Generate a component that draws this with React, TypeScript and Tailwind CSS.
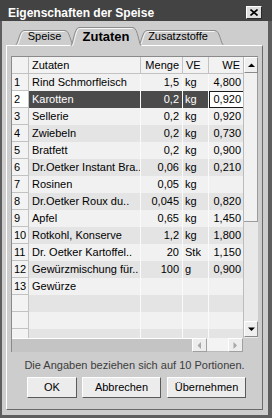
import React from "react";

const rows: string[][] = [
  ["1", "Rind Schmorfleisch", "1,5", "kg", "4,800"],
  ["2", "Karotten", "0,2", "kg", "0,920"],
  ["3", "Sellerie", "0,2", "kg", "0,920"],
  ["4", "Zwiebeln", "0,2", "kg", "0,730"],
  ["5", "Bratfett", "0,2", "kg", "0,900"],
  ["6", "Dr.Oetker Instant Bra..", "0,06", "kg", "0,210"],
  ["7", "Rosinen", "0,05", "kg", ""],
  ["8", "Dr.Oetker Roux du..", "0,045", "kg", "0,820"],
  ["9", "Apfel", "0,65", "kg", "1,450"],
  ["10", "Rotkohl, Konserve", "1,2", "kg", "1,800"],
  ["11", "Dr. Oetker Kartoffel..", "20", "Stk", "1,150"],
  ["12", "Gewürzmischung für..", "100", "g", "0,900"],
  ["13", "Gewürze", "", "", ""],
  ["", "", "", "", ""],
  ["", "", "", "", ""],
  ["", "", "", "", ""],
];

function Tab({
  label,
  w,
  h,
  active,
  className,
}: {
  label: string;
  w: number;
  h: number;
  active?: boolean;
  className: string;
}) {
  const outline = `M0.5 ${h} C3 ${h} 4 1.5 9 1.5 L${w - 9} 1.5 C${w - 4} 1.5 ${w - 3} ${h} ${w - 0.5} ${h}`;
  return (
    <div className={`relative shrink-0 flex items-end justify-center ${className}`}>
      <svg className="absolute left-0 top-0" width={w} height={h} viewBox={`0 0 ${w} ${h}`}>
        <path d={`${outline} Z`} fill="#cdcdcd" stroke="none" />
        <path d={outline} fill="none" stroke="#8c8c8c" />
        <path d={`M2 ${h} C4.5 ${h} 5.5 2.5 9.5 2.5 L${w - 9.5} 2.5`} fill="none" stroke="#f6f6f6" />
      </svg>
      <span className={`relative leading-[13px] ${active ? "font-bold text-[13px]" : "text-[11px]"}`}>
        {label}
      </span>
    </div>
  );
}

function Arrow({ dir, muted }: { dir: "up" | "down" | "left" | "right"; muted?: boolean }) {
  const pts = {
    up: "0,4 7,4 3.5,0.5",
    down: "0,0.5 7,0.5 3.5,4",
    left: "4,0 4,7 0.5,3.5",
    right: "0.5,0 0.5,7 4,3.5",
  }[dir];
  const vertical = dir === "up" || dir === "down";
  return (
    <svg width={vertical ? 7 : 5} height={vertical ? 5 : 7} viewBox={vertical ? "0 0 7 5" : "0 0 5 7"}>
      <polygon points={pts} fill={muted ? "#a8a8a8" : "#000"} />
    </svg>
  );
}

function GridRow({ r, i }: { r: string[]; i: number }) {
  const sel = i === 1;
  const even = (i + 1) % 2 === 0;
  const bg = sel ? "bg-[#4b4b4b] text-white" : even ? "bg-[#e4e4e4]" : "bg-[#f1f1f1]";
  return (
    <div className="flex h-[17px] shrink-0">
      <div
        className={`w-[17px] shrink-0 pl-[2px] leading-[16px] border-r border-b border-[#c2c2c2] ${
          sel ? "bg-white" : "bg-[#f3f3f3]"
        }`}
      >
        {r[0]}
      </div>
      <div className={`w-[112px] shrink-0 pl-[3px] leading-[17px] whitespace-nowrap overflow-hidden border-r border-[#fafafa] ${bg}`}>
        {r[1]}
      </div>
      <div className={`w-[42px] shrink-0 pr-[3px] text-right leading-[17px] border-r border-[#fafafa] ${bg}`}>{r[2]}</div>
      <div className={`w-[26px] shrink-0 pl-[2px] leading-[17px] border-r border-[#fafafa] ${bg}`}>{r[3]}</div>
      {sel ? (
        <div className="w-[35px] shrink-0 pr-[3px] text-right leading-[15px] bg-white border-l border-t border-b border-[#1a1a1a]">
          {r[4]}
        </div>
      ) : (
        <div className={`w-[35px] shrink-0 pr-[3px] text-right leading-[17px] ${bg}`}>{r[4]}</div>
      )}
    </div>
  );
}

export default function App() {
  return (
    <div className="w-[272px] h-[418px] bg-[#5e5e5e] flex flex-col font-['Liberation_Sans',Arial,sans-serif] text-[11px] text-black overflow-hidden">
      {/* title bar */}
      <div className="h-[21px] shrink-0 bg-[#434343] flex items-center pt-[4px] pl-[8px] pr-[10px]">
        <span className="flex-1 text-white font-bold text-[12px] leading-none">Eigenschaften der Speise</span>
        <div className="w-[16px] h-[13px] bg-[#dedede] border border-t-white border-l-white border-r-[#2a2a2a] border-b-[#2a2a2a] flex items-center justify-center">
          <svg width="8" height="7" viewBox="0 0 8 7">
            <path d="M0.5 0.5 L7.5 6.5 M7.5 0.5 L0.5 6.5" stroke="#000" strokeWidth="1.6" />
          </svg>
        </div>
      </div>

      {/* body */}
      <div className="flex-1 ml-[2px] mr-[4px] mb-[3px] bg-[#cdcdcd] flex flex-col">
        {/* tabs */}
        <div className="relative z-10 h-[24px] shrink-0 flex items-end pl-[13px]">
          <Tab label="Speise" w={59} h={16} className="w-[59px] h-[16px] pb-[2px]" />
          <Tab label="Zutaten" w={72} h={20} active className="z-10 w-[72px] h-[20px] -ml-[4px] -mb-[1px] pb-[3px]" />
          <Tab label="Zusatzstoffe" w={86} h={16} className="w-[86px] h-[16px] -ml-[4px] pb-[2px] pr-[6px]" />
        </div>

        {/* panel */}
        <div className="flex-1 ml-[4px] mr-[5px] mb-[5px] border border-t-white border-l-white border-r-[#6a6a6a] border-b-[#6a6a6a] flex flex-col pt-[10px] px-[4px]">
          {/* grid */}
          <div className="h-[296px] shrink-0 flex flex-col border-t border-l border-[#8a8a8a]">
            <div className="h-[281px] flex">
              {/* table */}
              <div className="w-[232px] flex flex-col overflow-hidden">
                <div className="flex h-[17px] shrink-0 bg-[#f2f2f2]">
                  <div className="w-[17px] shrink-0 border-r border-b border-[#c2c2c2]" />
                  <div className="w-[112px] shrink-0 pl-[3px] leading-[16px] border-r border-b border-[#c2c2c2]">Zutaten</div>
                  <div className="w-[42px] shrink-0 pr-[3px] text-right leading-[16px] border-r border-b border-[#c2c2c2]">Menge</div>
                  <div className="w-[26px] shrink-0 pl-[3px] leading-[16px] border-r border-b border-[#c2c2c2]">VE</div>
                  <div className="w-[35px] shrink-0 pr-[3px] text-right leading-[16px] border-b border-r border-[#c2c2c2]">WE</div>
                </div>
                {rows.map((r, i) => (
                  <GridRow key={i} r={r} i={i} />
                ))}
              </div>
              {/* vertical scrollbar */}
              <div className="w-[15px] flex flex-col bg-[#e9e9e9] border-l border-[#bcbcbc]">
                <div className="h-[16px] shrink-0 bg-[#efefef] border border-t-white border-l-white border-r-[#8a8a8a] border-b-[#8a8a8a] flex items-center justify-center">
                  <Arrow dir="up" />
                </div>
                <div className="h-[149px] shrink-0 bg-[#f1f1f1] border-r border-b border-[#9c9c9c]" />
                <div className="flex-1" />
                <div className="h-[16px] shrink-0 bg-[#efefef] border border-t-white border-l-white border-r-[#8a8a8a] border-b-[#8a8a8a] flex items-center justify-center">
                  <Arrow dir="down" />
                </div>
                <div className="h-[1px] shrink-0" />
              </div>
            </div>
            {/* horizontal scrollbar */}
            <div className="h-[14px] flex">
              <div className="w-[180px] bg-[#c4c4c4] border-t border-white" />
              <div className="w-[15px] bg-[#ededed] border border-t-white border-l-white border-r-[#a0a0a0] border-b-[#a0a0a0] flex items-center justify-center">
                <Arrow dir="left" muted />
              </div>
              <div className="w-[21px] bg-[#f3f3f3] border-b border-[#bcbcbc]" />
              <div className="w-[15px] bg-[#ededed] border border-t-white border-l-white border-r-[#a0a0a0] border-b-[#a0a0a0] flex items-center justify-center">
                <Arrow dir="right" muted />
              </div>
              <div className="flex-1" />
            </div>
          </div>

          <div className="mt-[6px] h-[14px] leading-[14px] text-center text-[#3c3c3c]">
            Die Angaben beziehen sich auf 10 Portionen.
          </div>

          {/* buttons */}
          <div className="mt-[5px] flex pl-[16px]">
            <button className="w-[50px] h-[21px] bg-[#ececec] border border-t-white border-l-white border-r-[#5a5a5a] border-b-[#5a5a5a] leading-none">
              OK
            </button>
            <button className="ml-[5px] w-[79px] h-[21px] bg-[#ececec] border border-t-white border-l-white border-r-[#5a5a5a] border-b-[#5a5a5a] leading-none">
              Abbrechen
            </button>
            <button className="ml-[6px] w-[79px] h-[21px] bg-[#ececec] border border-t-white border-l-white border-r-[#5a5a5a] border-b-[#5a5a5a] leading-none">
              Übernehmen
            </button>
          </div>
        </div>
      </div>
    </div>
  );
}
